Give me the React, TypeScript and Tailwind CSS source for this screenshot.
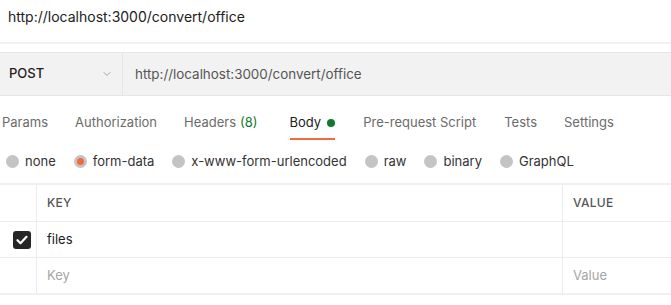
import { ChevronDown } from 'lucide-react'

const tabs = [
  { label: 'Params', gap: 'mr-[27px]' },
  { label: 'Authorization', gap: 'mr-[27px]' },
  { label: 'Headers', count: '(8)', gap: 'mr-[32px]' },
  { label: 'Body', active: true, gap: 'mr-[28px]' },
  { label: 'Pre-request Script', gap: 'mr-[28px]' },
  { label: 'Tests', gap: 'mr-[27px]' },
  { label: 'Settings', gap: '' },
]

const bodyTypes = ['none', 'form-data', 'x-www-form-urlencoded', 'raw', 'binary', 'GraphQL']

export default function App() {
  const url = 'http://localhost:3000/convert/office'

  return (
    <div className="h-[305px] w-[671px] overflow-hidden bg-white font-['Inter',sans-serif] text-[#212121]">
      {/* request name */}
      <div className="flex h-[42px] items-center pb-[10px] pl-[8px] text-[14px]">{url}</div>
      <div className="h-[2px] bg-[#f2f2f2]" />

      {/* method + url */}
      <div className="mt-[8px] flex h-[44px] border-y border-[#e6e6e6] bg-[#f2f2f2]">
        <div className="flex w-[123px] items-center justify-between border-r border-[#e6e6e6] pl-[9px] pr-[9px]">
          <span className="text-[13px] font-medium text-[#212121]">POST</span>
          <ChevronDown size={12} strokeWidth={1.5} className="text-[#8a8a8a]" />
        </div>
        <div className="flex items-center pl-[12px] text-[13.4px] text-[#555]">{url}</div>
      </div>

      {/* tabs */}
      <div className="mt-[10px] flex h-[34px] items-stretch pl-[2px] text-[13px]">
        {tabs.map((t) => (
          <div
            key={t.label}
            className={'relative flex items-center ' + t.gap + ' ' + (t.active ? 'text-[#212121]' : 'text-[#6b6b6b]')}
          >
            <span>{t.label}</span>
            {t.count && <span className="ml-[4px] text-[#0f7b2e]">{t.count}</span>}
            {t.active && <span className="ml-[6px] h-[8px] w-[8px] rounded-full bg-[#0f7b2e]" />}
            {t.active && <span className="absolute bottom-0 left-0 right-0 h-[2px] bg-[#f26b3a]" />}
          </div>
        ))}
      </div>

      {/* body type radios */}
      <div className="mt-[10px] flex h-[23px] items-center pl-[6px] text-[13px] text-[#333]">
        {bodyTypes.map((b) => (
          <div key={b} className="mr-[18px] flex items-center">
            <span className="flex h-[13px] w-[13px] items-center justify-center rounded-full bg-[#c4c4c4]">
              {b === 'form-data' && <span className="h-[7px] w-[7px] rounded-full bg-[#f26b3a]" />}
            </span>
            <span className="ml-[6px]">{b}</span>
          </div>
        ))}
      </div>

      {/* key/value table */}
      <div className="mt-[10px] border-t-2 border-[#f0f0f0]">
        <div className="flex h-[37px] border-b border-[#ececec] text-[12px] font-medium text-[#555]">
          <div className="w-[37px] border-r border-[#ececec]" />
          <div className="flex w-[526px] items-center border-r border-[#ececec] pl-[10px] tracking-[0.3px]">KEY</div>
          <div className="flex flex-1 items-center pl-[10px] tracking-[0.3px]">VALUE</div>
        </div>
        <div className="flex h-[36px] border-b border-[#ececec] text-[13px]">
          <div className="flex w-[37px] items-center justify-center border-r border-[#ececec] pl-[7px]">
            <span className="flex h-[18px] w-[18px] items-center justify-center rounded-[3px] bg-[#262626]">
              <svg width="12" height="10" viewBox="0 0 12 10" fill="none">
                <path d="M1.5 5.2 4.5 8.2 10.5 1.8" stroke="white" strokeWidth="2.2" strokeLinecap="round" strokeLinejoin="round" />
              </svg>
            </span>
          </div>
          <div className="flex w-[526px] items-center border-r border-[#ececec] pl-[10px] text-[#212121]">files</div>
          <div className="flex-1" />
        </div>
        <div className="flex h-[37px] border-b-2 border-[#f0f0f0] text-[13px] text-[#a6a6a6]">
          <div className="w-[37px] border-r border-[#ececec]" />
          <div className="flex w-[526px] items-center border-r border-[#ececec] pl-[10px]">Key</div>
          <div className="flex flex-1 items-center pl-[10px]">Value</div>
        </div>
      </div>
    </div>
  )
}
